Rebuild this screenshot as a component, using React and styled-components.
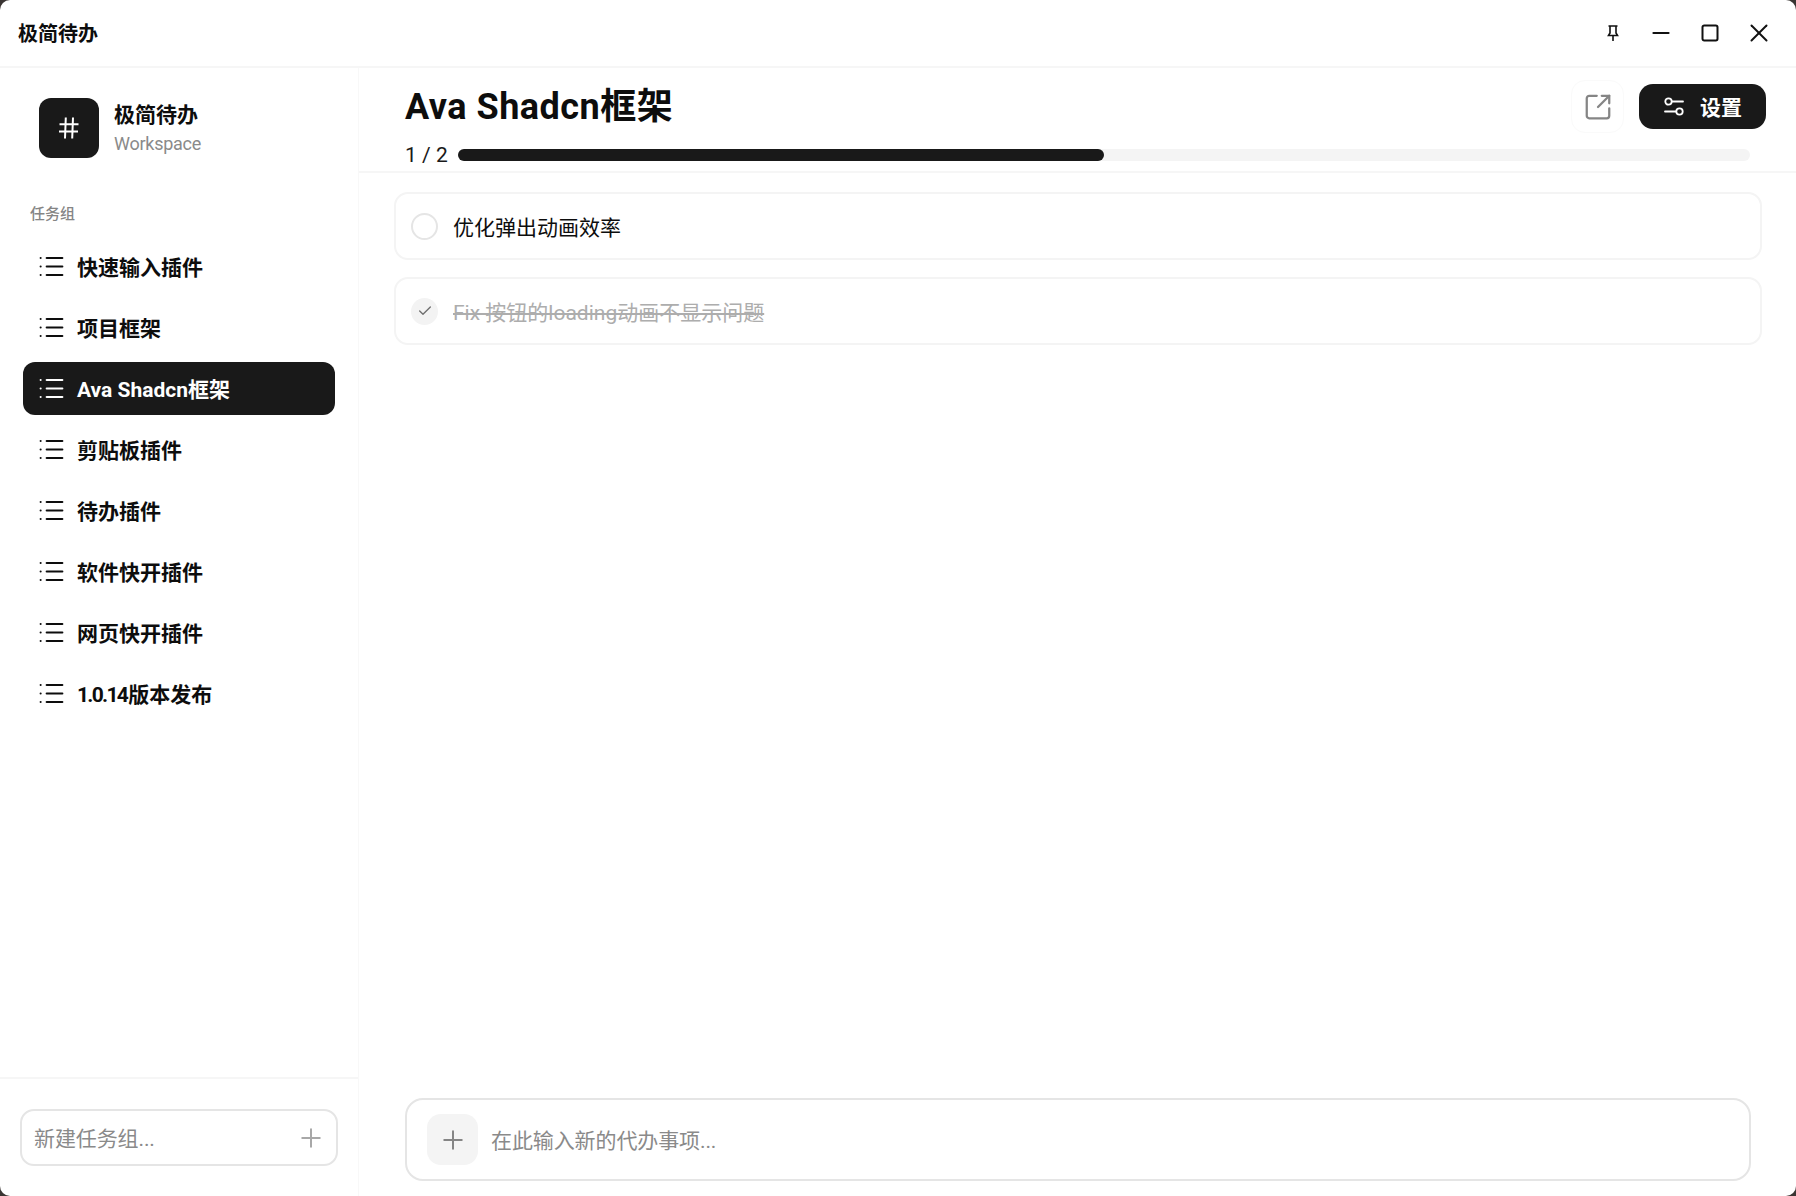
import React from 'react';
import styled, { createGlobalStyle } from 'styled-components';
import { List, Minus, Square, X, Check, Plus, SquareArrowOutUpRight } from 'lucide-react';

const GlobalStyle = createGlobalStyle`
  * { box-sizing: border-box; }
  html, body { margin: 0; padding: 0; background: #3a3533; }
  body { font-family: Roboto, "Noto Sans CJK SC", sans-serif; color: #0d0d0d; }
`;

const Window = styled.div`
  width: 1796px;
  height: 1196px;
  background: #ffffff;
  border-radius: 10px;
  overflow: hidden;
  display: flex;
  flex-direction: column;
`;

const TitleBar = styled.header`
  height: 68px;
  flex: none;
  display: flex;
  align-items: center;
  justify-content: space-between;
  padding: 0 13px 0 18px;
  border-bottom: 2px solid #f6f6f6;
`;

const AppName = styled.div`
  font-size: 20px;
  font-weight: 700;
  padding-bottom: 2px;
`;

const WindowControls = styled.div`
  display: flex;
  align-items: center;
  color: #111111;
`;

const WindowButton = styled.div`
  width: 48.7px;
  height: 40px;
  display: flex;
  align-items: center;
  justify-content: center;
`;

const Body = styled.div`
  flex: 1;
  display: flex;
  min-height: 0;
`;

const Sidebar = styled.aside`
  width: 359px;
  flex: none;
  display: flex;
  flex-direction: column;
  border-right: 1px solid #f8f8f8;
`;

const Brand = styled.div`
  display: flex;
  align-items: center;
  gap: 15px;
  padding: 30px 0 0 39px;
`;

const BrandLogo = styled.div`
  width: 60px;
  height: 60px;
  border-radius: 12px;
  background: #191919;
  color: #ffffff;
  display: flex;
  align-items: center;
  justify-content: center;
`;

const BrandText = styled.div`
  display: flex;
  flex-direction: column;
  padding-top: 2px;
`;

const BrandName = styled.div`
  font-size: 21px;
  font-weight: 700;
  line-height: 29px;
`;

const BrandSub = styled.div`
  font-size: 18px;
  line-height: 26px;
  letter-spacing: -0.25px;
  padding-top: 1px;
  color: #8a8a8a;
`;

const SectionLabel = styled.div`
  margin: 45px 0 0 30px;
  font-size: 15px;
  line-height: 22px;
  font-weight: 500;
  color: #858585;
`;

const GroupList = styled.nav`
  flex: 1;
  display: flex;
  flex-direction: column;
  gap: 8px;
  padding: 15px 23px 0;
`;

const GroupItem = styled.div`
  height: 53px;
  display: flex;
  align-items: center;
  gap: 11px;
  padding: 0 14px;
  border-radius: 12px;
  font-size: 21px;
  font-weight: 700;
  background: ${p => (p.$active ? '#191919' : 'transparent')};
  color: ${p => (p.$active ? '#ffffff' : '#0d0d0d')};
`;

const GroupName = styled.span`
  padding-bottom: 2px;
`;

const TightNumber = styled.span`
  letter-spacing: -1.7px;
  margin-right: 1px;
`;

const SidebarFooter = styled.div`
  height: 119px;
  flex: none;
  border-top: 2px solid #f6f6f6;
  padding: 30px 20px 0;
`;

const GroupInput = styled.div`
  height: 57px;
  display: flex;
  align-items: center;
  justify-content: space-between;
  padding: 0 10px 0 12px;
  border: 2px solid #e5e5e5;
  border-radius: 14px;
  font-size: 21px;
  color: #8a8a8a;
`;

const Hint = styled.span`
  padding-bottom: 2px;
  letter-spacing: -0.1px;
`;

const Main = styled.main`
  flex: 1;
  min-width: 0;
  display: flex;
  flex-direction: column;
`;

const Header = styled.div`
  height: 105px;
  flex: none;
  padding: 12px 30px 0 46px;
  border-bottom: 2px solid #f6f6f6;
`;

const HeaderTop = styled.div`
  display: flex;
  align-items: center;
  justify-content: space-between;
  height: 53px;
`;

const Title = styled.h1`
  margin: 0;
  padding-top: 2px;
  font-size: 36px;
  font-weight: 700;
  line-height: 53px;
  letter-spacing: 0.5px;
`;

const HeaderActions = styled.div`
  display: flex;
  align-items: center;
  gap: 15px;
`;

const IconButton = styled.div`
  width: 53px;
  height: 53px;
  display: flex;
  align-items: center;
  justify-content: center;
  border: 1px solid #fafafa;
  border-radius: 14px;
  color: #858585;
`;

const SettingsButton = styled.div`
  width: 127px;
  height: 45px;
  display: flex;
  align-items: center;
  justify-content: center;
  gap: 15px;
  border-radius: 14px;
  background: #191919;
  color: #ffffff;
  font-size: 21px;
  font-weight: 700;
`;

const SettingsLabel = styled.span`
  padding-bottom: 2px;
`;

const ProgressRow = styled.div`
  display: flex;
  align-items: center;
  gap: 9px;
  margin: 10px 16px 0 0;
  height: 24px;
`;

const ProgressLabel = styled.div`
  width: 44px;
  font-size: 21px;
  color: #1a1a1a;
  white-space: nowrap;
`;

const ProgressTrack = styled.div`
  flex: 1;
  height: 12px;
  border-radius: 6px;
  background: #f4f4f4;
`;

const ProgressFill = styled.div`
  height: 100%;
  border-radius: 6px;
  background: #191919;
`;

const TaskList = styled.div`
  flex: 1;
  display: flex;
  flex-direction: column;
  gap: 17px;
  padding: 19px 34px 0 35px;
`;

const TaskCard = styled.div`
  height: 68px;
  display: flex;
  align-items: center;
  gap: 15px;
  padding: 0 15px;
  border: 2px solid #f4f4f4;
  border-radius: 14px;
`;

const TaskCircle = styled.div`
  width: 27px;
  height: 27px;
  flex: none;
  border-radius: 50%;
  display: flex;
  align-items: center;
  justify-content: center;
  border: ${p => (p.$done ? 'none' : '2px solid #e5e5e5')};
  background: ${p => (p.$done ? '#f3f3f3' : 'transparent')};
  color: #6e6e6e;
`;

const TaskText = styled.div`
  font-size: 21px;
  padding-bottom: 1px;
  color: ${p => (p.$done ? '#adadad' : '#0d0d0d')};
  text-decoration: ${p => (p.$done ? 'line-through' : 'none')};
`;

const Composer = styled.div`
  height: 83px;
  flex: none;
  margin: 0 45px 15px 46px;
  display: flex;
  align-items: center;
  gap: 13px;
  padding: 0 20px;
  border: 2px solid #e5e5e5;
  border-radius: 18px;
  font-size: 21px;
  color: #8a8a8a;
`;

const ComposerAdd = styled.div`
  width: 51px;
  height: 51px;
  flex: none;
  display: flex;
  align-items: center;
  justify-content: center;
  border-radius: 14px;
  background: #f4f4f4;
  color: #858585;
`;

const PinIcon = () => (
  <svg width="12" height="16" viewBox="0 0 12 16" fill="none" stroke="currentColor" strokeWidth="1.6">
    <path d="M1.5 1h9M3 1v7L1.5 10.5h9L9 8V1M6 10.5V16" />
  </svg>
);

const HashIcon = () => (
  <svg width="22" height="24" viewBox="0 0 22 24" fill="none" stroke="currentColor" strokeWidth="2">
    <path d="M7.8 1.5L7 22.5M15 1.5L14.2 22.5M1.5 8.2H20.5M1 15.5H20" />
  </svg>
);

const SlidersIcon = () => (
  <svg width="22" height="22" viewBox="0 0 22 22" fill="none" stroke="currentColor" strokeWidth="1.8" strokeLinecap="round">
    <circle cx="5.5" cy="5.5" r="3.2" />
    <path d="M9 5.5h11" />
    <circle cx="16.5" cy="15.5" r="3.2" />
    <path d="M2 15.5h11" />
  </svg>
);

const groups = [
  { id: 'quick', label: '快速输入插件' },
  { id: 'project', label: '项目框架' },
  { id: 'ava', label: 'Ava Shadcn框架', active: true },
  { id: 'clipboard', label: '剪贴板插件' },
  { id: 'todo', label: '待办插件' },
  { id: 'apps', label: '软件快开插件' },
  { id: 'web', label: '网页快开插件' },
  { id: 'release', version: '1.0.14', label: '版本发布' },
];

export default function App() {
  return (
    <Window>
      <GlobalStyle />
      <TitleBar>
        <AppName>极简待办</AppName>
        <WindowControls>
          <WindowButton><PinIcon /></WindowButton>
          <WindowButton><Minus size={26} strokeWidth={1.9} /></WindowButton>
          <WindowButton><Square size={20} strokeWidth={2.4} /></WindowButton>
          <WindowButton><X size={30} strokeWidth={1.6} /></WindowButton>
        </WindowControls>
      </TitleBar>
      <Body>
        <Sidebar>
          <Brand>
            <BrandLogo><HashIcon /></BrandLogo>
            <BrandText>
              <BrandName>极简待办</BrandName>
              <BrandSub>Workspace</BrandSub>
            </BrandText>
          </Brand>
          <SectionLabel>任务组</SectionLabel>
          <GroupList>
            {groups.map(group => (
              <GroupItem key={group.id} $active={group.active}>
                <List size={29} strokeWidth={1.7} />
                <GroupName>
                  {group.version && <TightNumber>{group.version}</TightNumber>}
                  {group.label}
                </GroupName>
              </GroupItem>
            ))}
          </GroupList>
          <SidebarFooter>
            <GroupInput>
              <Hint>新建任务组...</Hint>
              <Plus size={30} strokeWidth={1.6} color="#a8a8a8" />
            </GroupInput>
          </SidebarFooter>
        </Sidebar>
        <Main>
          <Header>
            <HeaderTop>
              <Title>Ava Shadcn框架</Title>
              <HeaderActions>
                <IconButton>
                  <SquareArrowOutUpRight size={30} strokeWidth={1.8} />
                </IconButton>
                <SettingsButton>
                  <SlidersIcon />
                  <SettingsLabel>设置</SettingsLabel>
                </SettingsButton>
              </HeaderActions>
            </HeaderTop>
            <ProgressRow>
              <ProgressLabel>1 / 2</ProgressLabel>
              <ProgressTrack>
                <ProgressFill style={{ width: `${(1 / 2) * 100}%` }} />
              </ProgressTrack>
            </ProgressRow>
          </Header>
          <TaskList>
            <TaskCard>
              <TaskCircle />
              <TaskText>优化弹出动画效率</TaskText>
            </TaskCard>
            <TaskCard>
              <TaskCircle $done>
                <Check size={16} strokeWidth={2} />
              </TaskCircle>
              <TaskText $done>Fix 按钮的loading动画不显示问题</TaskText>
            </TaskCard>
          </TaskList>
          <Composer>
            <ComposerAdd>
              <Plus size={30} strokeWidth={1.6} />
            </ComposerAdd>
            <Hint>在此输入新的代办事项...</Hint>
          </Composer>
        </Main>
      </Body>
    </Window>
  );
}
